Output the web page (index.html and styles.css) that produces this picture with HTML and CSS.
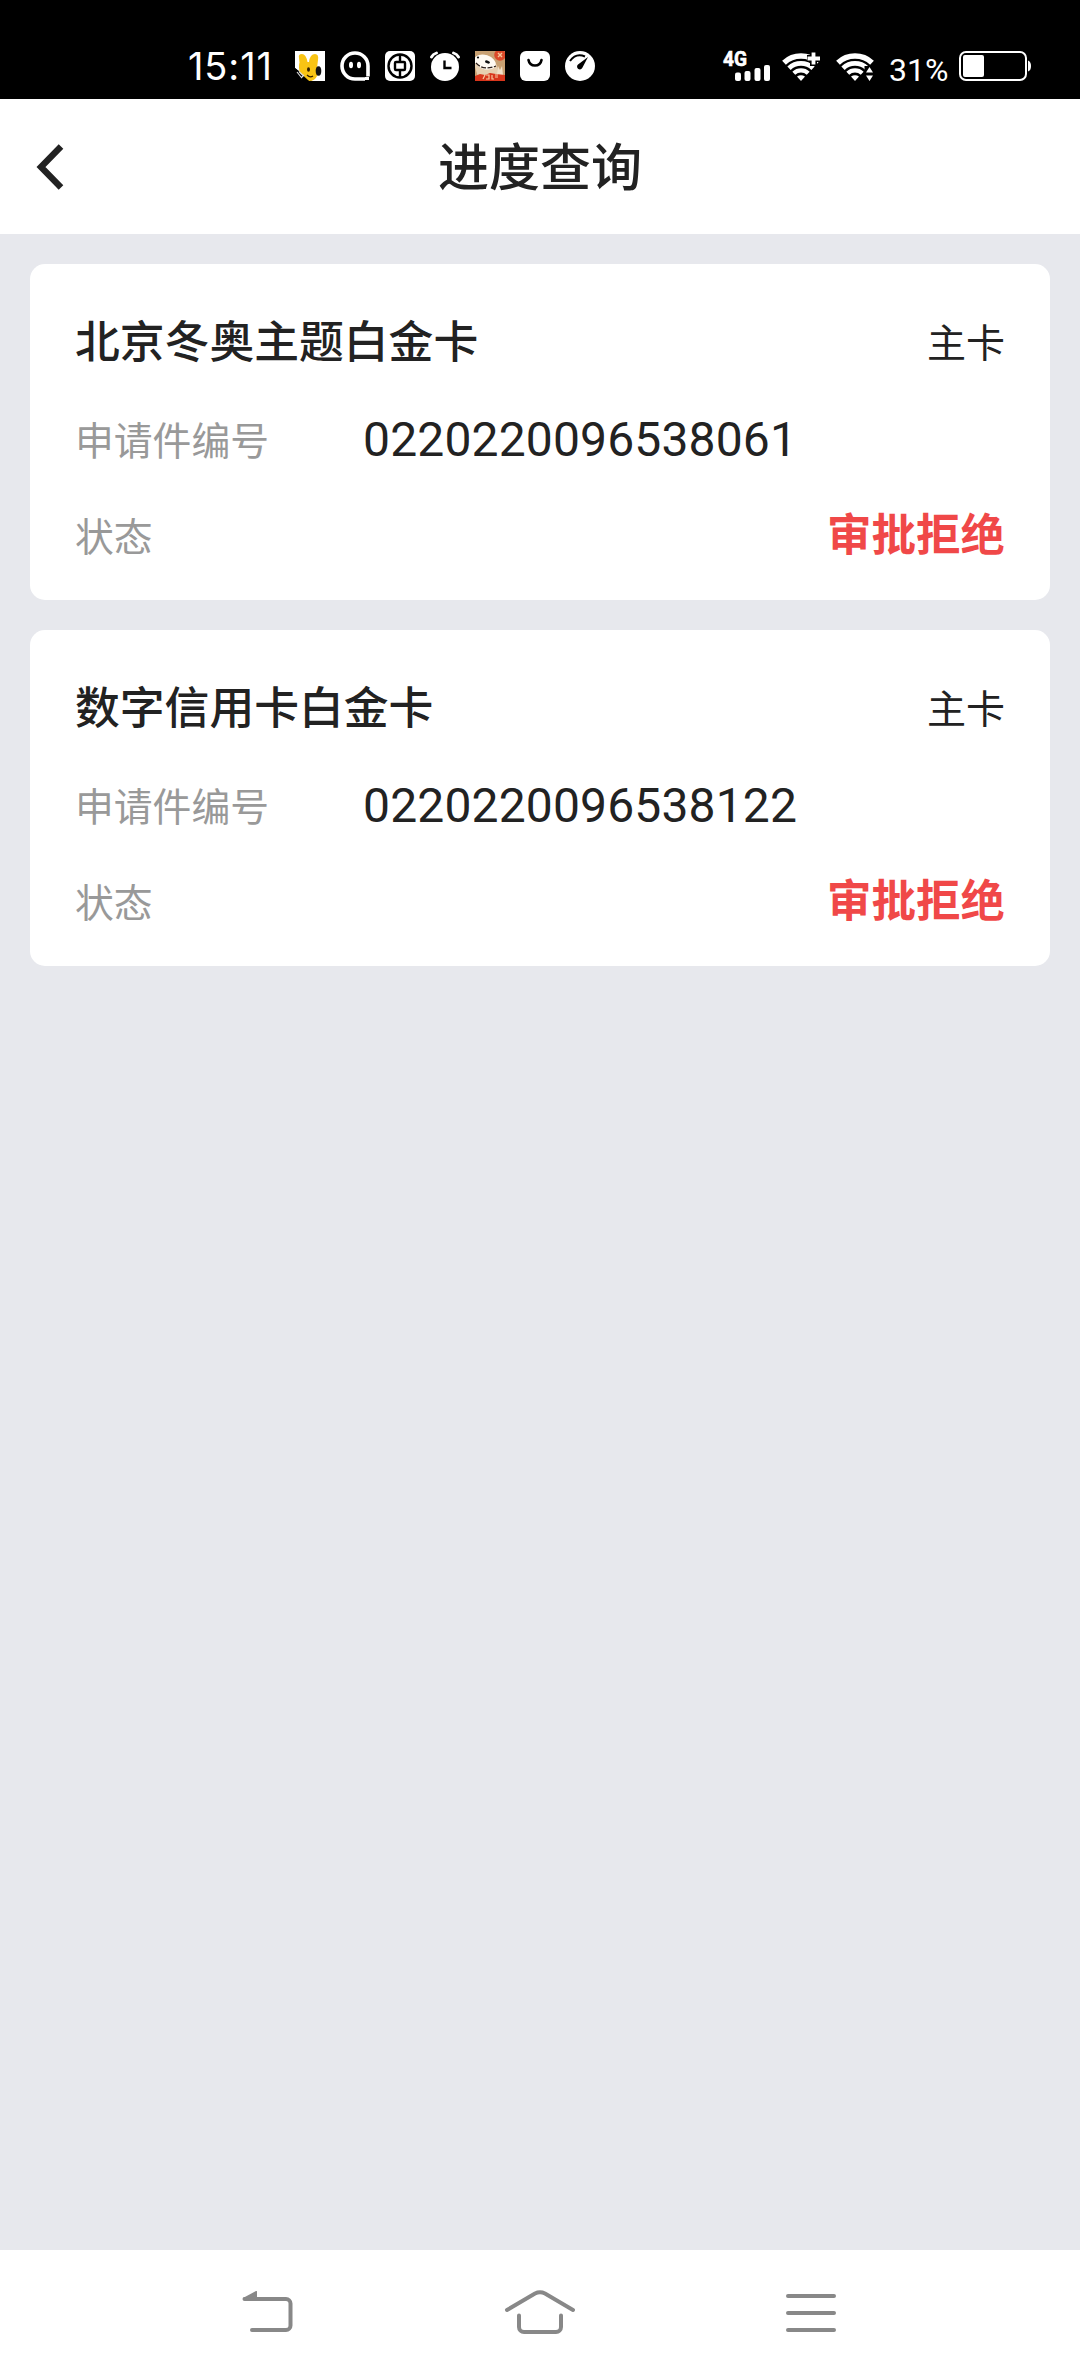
FILE: index.html
```html
<!DOCTYPE html>
<html lang="zh-CN">
<head>
<meta charset="utf-8">
<title>进度查询</title>
<link rel="stylesheet" href="styles.css">
</head>
<body>
<div class="screen">
  <div class="status-bar">
    <span class="time">15:11</span>
    <div class="notifications">
      <svg width="30" height="30" viewBox="0 0 30 30">
        <path fill="#fff" d="M0 0h30v30H17L0 17z"/>
        <path fill="#f9c414" d="M4 7Q3 3 7 3q4 0 5.500 8h1.500Q15 3 20 3q4 0 3 6l-1 8q3 4 0 8-2 5-8 5-10-4-10-13 0-5 .500-5z"/>
        <ellipse cx="23.500" cy="20" rx="2.800" ry="4.800" fill="#111"/>
        <ellipse cx="13.500" cy="18.500" rx="1.500" ry="2.200" fill="#332000"/>
        <path d="M12 24q3 3 6 1" fill="none" stroke="#332000" stroke-width="1.300"/>
        <path d="M0 17l14 13H0z"/>
        <path d="M2 21l4 5M4 20.500l4 4M6 27l3-3" stroke="#ddd" stroke-width="1.200"/>
      </svg>
      <svg width="30" height="30" viewBox="0 0 30 30">
        <path d="M15 2a13 13 0 1 0 0 26H28V15A13 13 0 0 0 15 2z" fill="none" stroke="#fff" stroke-width="3.600"/>
        <path d="M25 25.500h5V30h-5z" fill="#000"/>
        <path d="M25 26h4v3h-4z" fill="#fff"/>
        <ellipse cx="11" cy="14" rx="2" ry="3.200" fill="#fff"/>
        <ellipse cx="19" cy="14" rx="2" ry="3.200" fill="#fff"/>
      </svg>
      <svg width="30" height="30" viewBox="0 0 30 30">
        <rect width="30" height="30" rx="5" fill="#fff"/>
        <g fill="none" stroke="#000" stroke-width="2.400">
          <circle cx="15" cy="15" r="11.500"/>
          <rect x="10" y="11" width="10" height="8" rx="1"/>
          <path d="M15 4v7M15 19v7"/>
        </g>
      </svg>
      <svg width="30" height="30" viewBox="0 0 30 30">
        <circle cx="15" cy="16" r="14" fill="#fff"/>
        <path d="M1.500 6Q3 3 6.500 2M28.500 6Q27 3 23.500 2" fill="none" stroke="#fff" stroke-width="2.800" stroke-linecap="round"/>
        <path d="M14.500 9.500V17H21.500" fill="none" stroke="#000" stroke-width="2.400"/>
      </svg>
      <svg width="30" height="30" viewBox="0 0 30 30">
        <rect width="30" height="30" fill="#c9a172"/>
        <path d="M0 8Q8 0 18 8q6 6 5 18H3L0 16z" fill="#e6cfb0"/>
        <ellipse cx="10" cy="11" rx="11" ry="7" transform="rotate(18 10 11)" fill="#fffaf2"/>
        <path d="M1 12Q8 20 21 15" fill="none" stroke="#2b1d17" stroke-width="1.300" stroke-dasharray="5 1.500"/>
        <ellipse cx="12.500" cy="11" rx="2.600" ry="1.400" transform="rotate(18 12.500 11)" fill="#111"/>
        <circle cx="3" cy="6.500" r="1.100" fill="#111"/>
        <circle cx="25" cy="4" r="5.800" fill="#dc4a2a"/>
        <path d="M23 2l4 4M27 2l-4 4" stroke="#f6c69a" stroke-width="1.400"/>
        <path d="M22 24l1-9 2 4 2-4 1 9z" fill="#f0e0c8"/>
        <path d="M0 25l5-2 5 1 5-2 6 1 9 1v6H0z" fill="#d8361c"/>
        <path d="M8 28l2-4M11 24h3v4h-3M17 24v4h2M20 24h3M20 26h3" fill="none" stroke="#f8c8a0" stroke-width="1.200"/>
      </svg>
      <svg width="30" height="30" viewBox="0 0 30 30">
        <rect width="30" height="30" rx="6" fill="#fff"/>
        <path d="M8.500 9Q9.500 14.500 15 14.500T21.500 9" fill="none" stroke="#000" stroke-width="2.600" stroke-linecap="round"/>
      </svg>
      <svg width="30" height="30" viewBox="0 0 30 30">
        <circle cx="15" cy="15" r="15" fill="#fff"/>
        <path d="M5 10Q11 1.500 20 5.500" fill="none" stroke="#000" stroke-width="2"/>
        <path d="M23 6L17.500 16.500A2.800 2.800 0 1 1 13 13.500z"/>
      </svg>
    </div>
    <div class="system">
      <svg class="signal" width="50" height="32" viewBox="0 0 50 32">
        <text class="network" x="1" y="16" textLength="24" lengthAdjust="spacingAndGlyphs">4G</text>
        <g fill="#fff">
          <rect x="13" y="22.500" width="6" height="8.500" rx="2"/>
          <rect x="22.500" y="21" width="6" height="10" rx="2"/>
          <rect x="32.500" y="18" width="6" height="13" rx="2"/>
          <rect x="42" y="15" width="6" height="16" rx="2"/>
        </g>
      </svg>
      <svg class="wifi" width="40" height="32" viewBox="0 0 40 32">
        <g fill="none" stroke="#fff">
          <path stroke-width="5.500" d="M2 12.700A25 25 0 0 1 36 12.700"/>
          <path stroke-width="4.800" d="M7 18.200A17.500 17.500 0 0 1 31 18.200"/>
          <path stroke-width="4.200" d="M11.800 23.300A10.500 10.500 0 0 1 26.200 23.300"/>
        </g>
        <path fill="#fff" d="M19 31l-4-4.500Q19 24 23 26.500z"/>
        <path d="M31.500 2v14M25 8.500h15" stroke="#000" stroke-width="7"/>
        <path d="M31.500 2.500v12M25.500 8.500h12.500" stroke="#fff" stroke-width="3.800"/>
      </svg>
      <svg class="wifi wifi-data" width="40" height="32" viewBox="0 0 40 32">
        <g fill="none" stroke="#fff">
          <path stroke-width="5.500" d="M2 12.700A25 25 0 0 1 36 12.700"/>
          <path stroke-width="4.800" d="M7 18.200A17.500 17.500 0 0 1 31 18.200"/>
          <path stroke-width="4.200" d="M11.800 23.300A10.500 10.500 0 0 1 26.200 23.300"/>
        </g>
        <path fill="#fff" d="M19 31l-4-4.500Q19 24 23 26.500z"/>
        <path d="M28.500 16h12V32h-12z"/>
        <path fill="#fff" d="M33.500 17l3.500 5.500h-7zM33.500 31l3.500-5.500h-7z"/>
      </svg>
      <span class="percent">31%</span>
      <svg width="74" height="32" viewBox="0 0 74 32">
        <rect x="1" y="2" width="66" height="28" rx="6" fill="none" stroke="#fff" stroke-width="2"/>
        <rect x="4" y="5" width="21" height="22" rx="2" fill="#fff"/>
        <path d="M69 10.500q3 1 3 5.500t-3 5.500z" fill="#fff"/>
      </svg>
    </div>
  </div>

  <header class="header">
    <svg class="back" width="30" height="46" viewBox="0 0 30 46"><path d="M25 2.500L5 23 25 43.500" fill="none" stroke="#222" stroke-width="6.400"/></svg>
    <h1 class="page-title">进度查询</h1>
  </header>

  <main class="content">
    <section class="card">
      <div class="row"><h2 class="card-name">北京冬奥主题白金卡</h2><span class="card-type">主卡</span></div>
      <div class="row row-number"><span class="label">申请件编号</span><span class="number">0220220096538061</span></div>
      <div class="row row-status"><span class="label">状态</span><strong class="result">审批拒绝</strong></div>
    </section>
    <section class="card">
      <div class="row"><h2 class="card-name">数字信用卡白金卡</h2><span class="card-type">主卡</span></div>
      <div class="row row-number"><span class="label">申请件编号</span><span class="number">0220220096538122</span></div>
      <div class="row row-status"><span class="label">状态</span><strong class="result">审批拒绝</strong></div>
    </section>
  </main>

  <nav class="nav-bar">
    <svg width="52" height="44" viewBox="0 0 52 44">
      <path d="M10 40H44a4.500 4.500 0 0 0 4.500-4.500V13.500a4.500 4.500 0 0 0-4.500-4.500H2.500" fill="none" stroke="#888" stroke-width="4" stroke-linecap="round" stroke-linejoin="round"/>
      <path d="M1 8L14 1q1-.400 1 .500V10H1z" fill="#888"/>
    </svg>
    <svg width="72" height="46" viewBox="0 0 72 46" fill="none" stroke="#888" stroke-width="4" stroke-linecap="round">
      <path d="M3 21L31 4.500q5-2.500 10 0L69 21"/>
      <path d="M15 26.500V38a5 5 0 0 0 5 5H52a5 5 0 0 0 5-5V26.500"/>
    </svg>
    <svg width="52" height="44" viewBox="0 0 52 44" fill="none" stroke="#888" stroke-width="4" stroke-linecap="round">
      <path d="M2 6H48M2 23H48M2 40H48"/>
    </svg>
  </nav>
</div>
</body>
</html>
```
FILE: styles.css
```css
* { box-sizing: border-box; }

body {
  margin: 0;
  font-family: Roboto, "Noto Sans CJK SC", sans-serif;
  color: #222;
}

svg { display: block; flex: none; }

.screen {
  width: 1080px;
  height: 2376px;
  display: flex;
  flex-direction: column;
  background: #e7e8ed;
}

.status-bar {
  height: 99px;
  padding: 50px 47px 0 188px;
  display: flex;
  align-items: flex-start;
  background: #000;
  color: #fff;
}

.time {
  width: 107px;
  font: 400 38px/32px Inter, sans-serif;
  letter-spacing: 0.9px;
}

.notifications {
  display: flex;
  gap: 15px;
  padding-top: 1px;
}

.system {
  display: flex;
  margin-left: auto;
}

.signal { overflow: visible; }

.network {
  font: 700 21px Roboto, sans-serif;
  fill: #fff;
  stroke: #fff;
  stroke-width: 0.6px;
}

.wifi { margin-left: 10px; }
.wifi-data { margin-left: 14px; }

.percent {
  width: 70px;
  margin-left: 13px;
  padding-top: 4px;
  font: 400 32px/32px Roboto, sans-serif;
}

.header {
  height: 135px;
  display: grid;
  grid-template-columns: 80px 1fr 80px;
  align-items: center;
  background: #fff;
}

.back { margin-left: 36px; }

.page-title {
  margin: 0;
  padding-top: 5px;
  text-align: center;
  font-size: 51px;
  font-weight: 500;
  line-height: 74px;
}

.content {
  flex: 1;
  display: flex;
  flex-direction: column;
  gap: 30px;
  padding: 30px;
}

.card {
  height: 336px;
  padding: 46px 45px 0;
  border-radius: 15px;
  background: #fff;
}

.row {
  height: 66px;
  display: flex;
  align-items: center;
  justify-content: space-between;
  line-height: 66px;
}

.row-number {
  margin-top: 31px;
  justify-content: flex-start;
}

.row-status { margin-top: 30px; }

.card-name {
  margin: 0;
  font-size: 44.800px;
  font-weight: 500;
}

.card-type {
  padding-top: 1px;
  font-size: 39px;
}

.label {
  width: 288px;
  padding-top: 3px;
  font-size: 38.800px;
  color: #999;
}

.number {
  font-size: 48px;
  letter-spacing: 0.150px;
}

.result {
  font-size: 44.500px;
  font-weight: 700;
  color: #f04848;
}

.nav-bar {
  height: 126px;
  padding: 0 242px 2px;
  display: flex;
  align-items: center;
  justify-content: space-between;
  background: #fff;
}
```
